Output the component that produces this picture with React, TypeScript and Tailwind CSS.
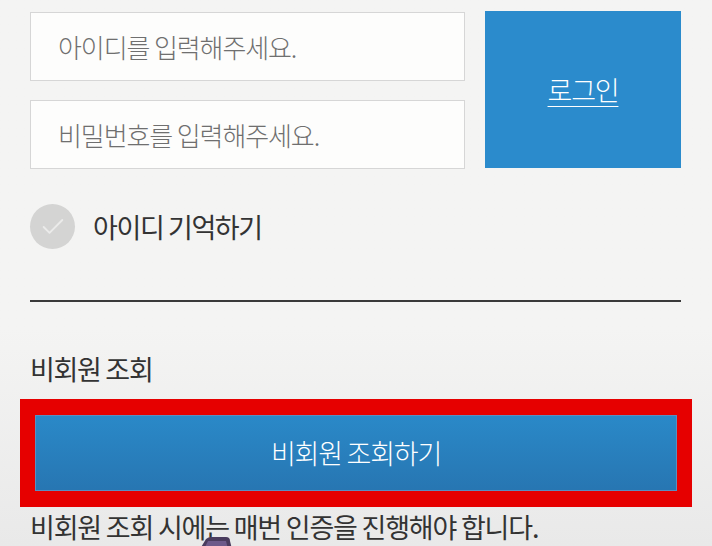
import { Check } from 'lucide-react';

export default function App() {
  return (
    <div className="relative h-[546px] w-[712px] overflow-hidden bg-gradient-to-b from-[#f4f4f3] from-60% to-[#e9e9e9] font-['Noto_Sans_CJK_KR','Noto_Sans',sans-serif]">
      <div className="flex flex-col px-[30px] pt-[11px]">
        <div className="flex gap-5">
          <div className="flex w-[435px] flex-col gap-[19px] pt-px">
            <div className="flex h-[69px] items-center border border-[#d6d6d6] bg-[#fdfdfc] pl-[27px] text-[26px] leading-[30px] font-light tracking-[-1.1px] text-[#6f6f6f]">
              아이디를 입력해주세요.
            </div>
            <div className="flex h-[69px] items-center border border-[#d6d6d6] bg-[#fdfdfc] pl-[27px] text-[26px] leading-[30px] font-light tracking-[-1.1px] text-[#6f6f6f]">
              비밀번호를 입력해주세요.
            </div>
          </div>
          <button className="flex h-[157px] w-[196px] items-center justify-center bg-[#2b8bcc] text-[27px] leading-[30px] font-light tracking-[-1.2px] text-white underline decoration-1 underline-offset-[5px]">
            로그인
          </button>
        </div>

        <div className="mt-[35px] flex items-center gap-[18px]">
          <div className="flex h-[45px] w-[45px] items-center justify-center rounded-full bg-[#d4d4d3]">
            <Check size={28} strokeWidth={1.6} className="text-[#ebebea]" />
          </div>
          <span className="text-[27px] leading-[30px] tracking-[-1.4px] text-[#333]">아이디 기억하기</span>
        </div>

        <div className="mt-[51px] h-[2px] w-[651px] bg-[#3a3a3a]" />

        <div className="mt-[52px] text-[27px] leading-[30px] tracking-[-1.3px] text-[#333]">비회원 조회</div>

        <div className="-mx-[10px] mt-[15px] bg-[#e60000] px-[15px] py-[16px]">
          <button className="flex h-[76px] w-full items-center justify-center border border-[#5a8fc0] bg-gradient-to-b from-[#2a89c8] to-[#2776b2] text-[27px] leading-[30px] font-light tracking-[-1.2px] text-white">
            비회원 조회하기
          </button>
        </div>

        <div className="mt-[5px] whitespace-nowrap text-[27px] leading-[30px] tracking-[-1.2px] text-[#333]">
          비회원 조회 시에는 매번 인증을 진행해야 합니다.
        </div>
      </div>
      <svg className="absolute left-[196px] top-[537px]" width="40" height="12" viewBox="0 0 40 12">
        <path d="M4 12 L10 2 Q12 0 16 0 L30 0 Q34 0 34 4 L36 12 Z" fill="#4a3c5e" />
        <path d="M12 4 L30 4 L32 12 L8 12 Z" fill="#6d5a8a" />
      </svg>
    </div>
  );
}
